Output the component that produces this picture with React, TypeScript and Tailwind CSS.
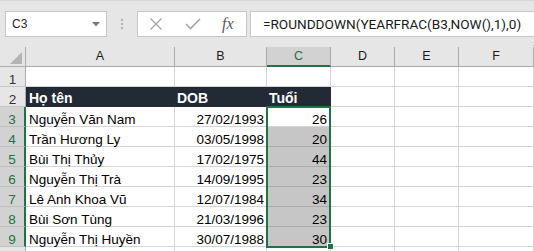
import React from 'react';

type Row = { name: string; dob: string; age: number };

const rows: Row[] = [
  { name: 'Nguyễn Văn Nam', dob: '27/02/1993', age: 26 },
  { name: 'Trần Hương Ly', dob: '03/05/1998', age: 20 },
  { name: 'Bùi Thị Thủy', dob: '17/02/1975', age: 44 },
  { name: 'Nguyễn Thị Trà', dob: '14/09/1995', age: 23 },
  { name: 'Lê Anh Khoa Vũ', dob: '12/07/1984', age: 34 },
  { name: 'Bùi Sơn Tùng', dob: '21/03/1996', age: 23 },
  { name: 'Nguyễn Thị Huyền', dob: '30/07/1988', age: 30 },
];

const columns = ['A', 'B', 'C', 'D', 'E', 'F'];

const cell = 'h-5 border-r border-b border-[#d4d4d4] flex items-end leading-none whitespace-nowrap';
const headCell = 'h-5 bg-[#222a35] flex items-end leading-none pb-[2px] font-bold text-[14px] text-white';

const RowHeader: React.FC<{ n?: number; selected?: boolean }> = ({ n, selected }) => (
  <div
    className={`h-5 border-b flex items-end justify-center leading-none ${
      selected
        ? 'bg-[#d2d2d2] text-[#217346] border-r-2 border-r-[#217346] border-b-[#c0c0c0]'
        : 'bg-[#e6e6e6] text-[#333] border-r border-r-[#ababab] border-b-[#c6c6c6]'
    }`}
  >
    {n}
  </div>
);

const FormulaBar: React.FC = () => (
  <div className="h-[47px] bg-[#e6e6e6] border-t border-[#d6d6d6] flex items-start pt-[10px]">
    {/* name box */}
    <div className="ml-[5px] w-[102px] h-[26px] bg-white border border-[#c6c6c6] flex items-center justify-between pl-[6px] pr-[6px]">
      <span className="text-[12px] text-[#262626]">C3</span>
      <svg width="8" height="5" viewBox="0 0 8 5">
        <path d="M0 0 L8 0 L4 4.5 Z" fill="#7a7a7a" />
      </svg>
    </div>
    {/* grip */}
    <div className="w-[30px] h-[26px] flex flex-col items-center justify-center gap-[2px]">
      <span className="w-[2px] h-[2px] bg-[#b3b3b3]" />
      <span className="w-[2px] h-[2px] bg-[#b3b3b3]" />
      <span className="w-[2px] h-[2px] bg-[#b3b3b3]" />
    </div>
    {/* cancel / enter / insert function */}
    <div className="w-[110px] h-[26px] bg-white border border-[#c6c6c6] flex items-center pl-[12px]">
      <svg width="12" height="12" viewBox="0 0 12 12">
        <path d="M0.5 0.5 L11.5 11.5 M11.5 0.5 L0.5 11.5" stroke="#a6a6a6" strokeWidth="1.3" fill="none" />
      </svg>
      <svg className="ml-[23px]" width="16" height="12" viewBox="0 0 16 12">
        <path d="M1 6 L5.5 10.5 L15 1" stroke="#a6a6a6" strokeWidth="1.6" fill="none" />
      </svg>
      <span className="ml-[21px] font-['Liberation_Serif',serif] italic text-[16px] text-[#5a5a5a] leading-none">
        fx
      </span>
    </div>
    {/* formula input */}
    <div className="ml-[3px] flex-1 h-[26px] bg-white border border-r-0 border-[#c6c6c6] flex items-center pl-[12px] overflow-hidden">
      <span className="font-['Roboto',sans-serif] text-[13.6px] text-[#1a1a1a] whitespace-nowrap">
        =ROUNDDOWN(YEARFRAC(B3,NOW(),1),0)
      </span>
    </div>
  </div>
);

export default function App() {
  return (
    <div className="w-[534px] h-[251px] overflow-hidden bg-white relative font-['Liberation_Sans',Arial,sans-serif] text-[13.5px] text-black">
      <FormulaBar />

      <div className="grid grid-cols-[26px_149px_92px_64px_64px_64px_75px]">
        {/* column headers */}
        <div className="h-5 bg-[#e6e6e6] border-r border-b border-[#ababab] flex items-end justify-end pr-[3px] pb-[2px]">
          <svg width="12" height="12" viewBox="0 0 12 12">
            <path d="M12 0 L12 12 L0 12 Z" fill="#b4b4b4" />
          </svg>
        </div>
        {columns.map((c) => (
          <div
            key={c}
            className={`h-5 border-r border-[#ababab] flex items-center justify-center text-[12.5px] ${
              c === 'C'
                ? 'bg-[#d2d2d2] text-[#217346] border-b-2 border-b-[#217346]'
                : 'bg-[#e6e6e6] text-[#1a1a1a] border-b'
            }`}
          >
            {c}
          </div>
        ))}

        {/* row 1 */}
        <RowHeader n={1} />
        {columns.map((c) => (
          <div key={c} className={cell} />
        ))}

        {/* row 2: table header */}
        <RowHeader n={2} />
        <div className={`${headCell} pl-[3px]`}>Họ tên</div>
        <div className={`${headCell} pl-[2px]`}>DOB</div>
        <div className={`${headCell} pl-[2px]`}>Tuổi</div>
        <div className={cell} />
        <div className={cell} />
        <div className={cell} />

        {/* data rows */}
        {rows.map((r, i) => (
          <React.Fragment key={r.name}>
            <RowHeader n={i + 3} selected />
            <div className={`${cell} pl-[3px]`}>{r.name}</div>
            <div className={`${cell} justify-end pr-[2px]`}>{r.dob}</div>
            <div
              className={`h-5 border-r border-b flex items-end justify-end leading-none pr-[3px] ${
                i === 0 ? 'bg-white border-[#d4d4d4]' : 'bg-[#c6c6c6] border-r-[#d4d4d4] border-b-[#ababab]'
              }`}
            >
              {r.age}
            </div>
            <div className={cell} />
            <div className={cell} />
            <div className={cell} />
          </React.Fragment>
        ))}

        {/* row 10, only its top edge is in view */}
        <RowHeader />
        {columns.map((c) => (
          <div key={c} className={cell} />
        ))}
      </div>

      {/* selection C3:C9 */}
      <div className="absolute left-[266px] top-[106px] w-[65px] h-[142px] border-2 border-[#217346]">
        <div className="absolute -right-[5px] -bottom-[4px] w-[7px] h-[7px] bg-[#217346] border border-white" />
      </div>
    </div>
  );
}
